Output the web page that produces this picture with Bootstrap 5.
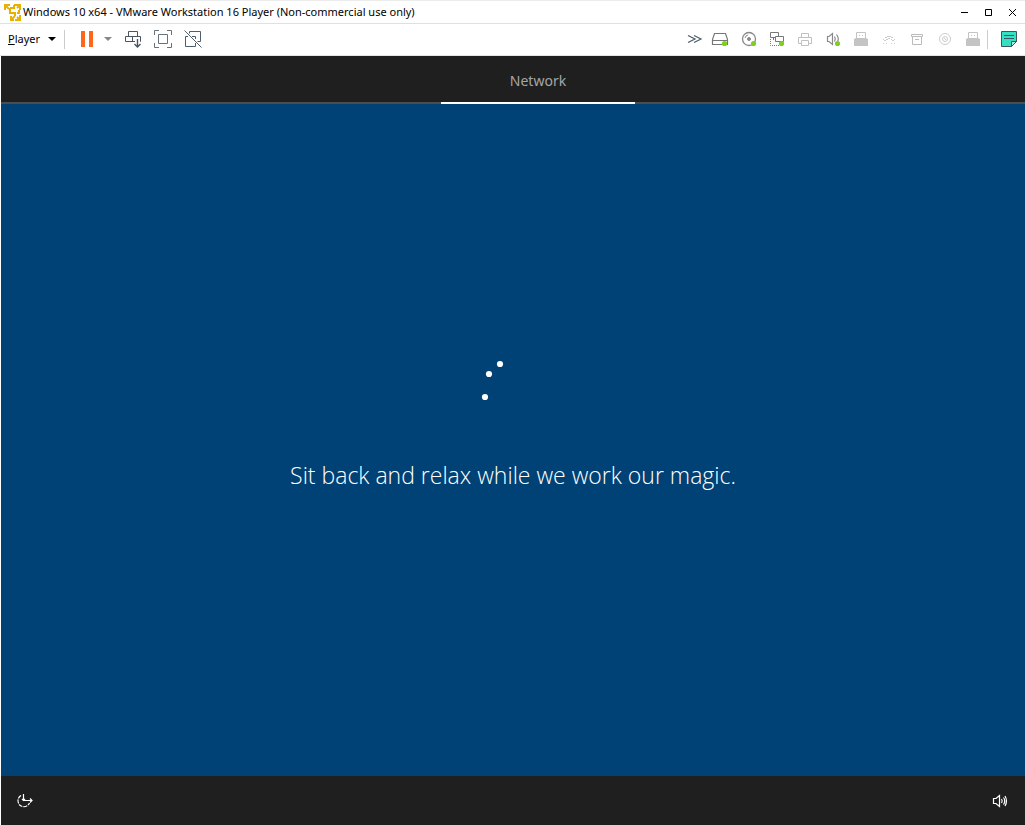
<!DOCTYPE html>
<html lang="en">
<head>
<meta charset="utf-8">
<meta name="viewport" content="width=device-width, initial-scale=1">
<title>Windows 10 x64 - VMware Workstation 16 Player</title>
<link href="https://cdn.jsdelivr.net/npm/bootstrap@5.3.0/dist/css/bootstrap.min.css" rel="stylesheet">
<style>
  body { font-family: "Noto Sans", "Open Sans", sans-serif; font-size: 11px; line-height: 16px; color: #000; background: #fff; }
  svg { display: block; flex: none; }
  .titlebar { height: 24px; border-top: 1px solid #ececec; border-bottom: 1px solid #e0e0e0; }
  .titlebar h1 { font-size: 11px; line-height: 16px; font-weight: 400; padding-left: 2px; }
  .toolbar { height: 32px; border-bottom: 1px solid #e4e6e4; padding-bottom: 1px; }
  .tool { display: flex; align-items: center; justify-content: center; height: 30px; padding: 0; border: 0; background: none; color: inherit; }
  .win { width: 24px; height: 22px; }
  .dev { width: 28px; }
  .act { width: 30px; }
  .power { width: 20px; margin-left: 5px; }
  .log { margin: 0 2px 0 7px; }
  .rule { width: 1px; height: 19px; background: #ccc; }
  .guest { margin-left: 1px; }
  .stages { height: 48px; background: #1f1f1f; border-bottom: 2px solid #4d4d4d; padding-left: 50px; }
  .stage-tab { width: 194px; height: 48px; margin-bottom: -2px; padding-top: 4px; border-bottom: 2px solid #fff; color: #a6a6a6; font-size: 14px; line-height: 20px; text-decoration: none; }
  .stage-view { background: #004275; color: #fff; gap: 36px; padding-bottom: 24px; }
  .message { font-family: "Open Sans", "Noto Sans", sans-serif; font-size: 23px; line-height: 38px; font-weight: 300; margin-bottom: 2px; }
  .bottom { height: 49px; background: #1f1f1f; color: #fff; padding: 1px 16px 0 15px; }
</style>
</head>
<body class="d-flex flex-column vh-100 overflow-hidden">
<header>
  <div class="titlebar d-flex align-items-center">
    <svg class="ms-1" width="17" height="17" viewBox="0 0 17 17" fill="none" stroke="#e9b000" stroke-width="2"><path d="M1 6V1h5M1 1l4 4M6 4h4V1M10 1h6v5M16 1l-3 3M6 4v5h5v3M15 6v3h-2M7 12v4h3M8 15l3-3M16 11v5h-5M16 16l-3-3"/></svg>
    <h1 class="mb-0 text-nowrap flex-grow-1">Windows 10 x64 - VMware Workstation 16 Player (Non-commercial use only)</h1>
    <button class="tool win" type="button" aria-label="Minimize"><svg width="8" height="9" viewBox="0 0 8 9"><path d="M0 4h7v1H0z"/></svg></button>
    <button class="tool win" type="button" aria-label="Maximize"><svg width="8" height="9" viewBox="0 0 8 9" fill="none" stroke="#000"><path d="M.5 1.500h6v6h-6z"/></svg></button>
    <button class="tool win" type="button" aria-label="Close"><svg width="8" height="9" viewBox="0 0 8 9" stroke="#000"><path d="M0 1l7 7M7 1L0 8"/></svg></button>
  </div>
  <nav class="toolbar d-flex align-items-center" aria-label="Virtual machine">
    <button class="tool ms-2" type="button"><span><u>P</u>layer</span><svg class="ms-2" width="8" height="5" viewBox="0 0 8 5"><path d="M0 0h8L4 4z"/></svg></button>
    <span class="rule ms-2 me-3"></span>
    <button class="tool" type="button" aria-label="Suspend"><svg width="12" height="16" viewBox="0 0 12 16" fill="#ff661b"><path d="M0 0h4v16H0zM8 0h4v16H8z"/></svg></button>
    <button class="tool power" type="button" aria-label="Power options"><svg width="8" height="5" viewBox="0 0 8 5" fill="#888"><path d="M0 0h8L4 4z"/></svg></button>
    <button class="tool act" type="button" aria-label="Send Ctrl+Alt+Del"><svg width="18" height="18" viewBox="0 0 18 18" fill="none" stroke="#4a5560"><path d="M4.500 1.500h9v5h-9zM11 11.500H1.500v-5h15v5H16M8.500 6.500v5"/><path d="M13.500 9v8M10.500 14l3 3 3-3" stroke-width="1.400"/></svg></button>
    <button class="tool act" type="button" aria-label="Full screen"><svg width="18" height="18" viewBox="0 0 18 18" fill="none" stroke="#66717a"><path d="M.5 5V.5H5M13 .5h4.500V5M17.500 13v4.500H13M5 17.500H.5V13M4.500 4.500h9v9h-9z"/></svg></button>
    <button class="tool act" type="button" aria-label="Unity"><svg width="18" height="18" viewBox="0 0 18 18" fill="none" stroke="#4d5e6c"><path d="M5.500 1.500h11v10h-3M5.500 1.500v2M4 6.500H1.500v10h10V13M8 6.500h3.500V9M.5.5l17 17"/></svg></button>

    <div class="d-flex align-items-center ms-auto">
      <button class="tool dev" type="button" aria-label="Collapse devices"><svg width="16" height="10" viewBox="0 0 16 10" fill="none" stroke="#4a5a6a" stroke-width="1.200"><path d="M1 1.500l7 3.500-7 3.500M7 1.500l7 3.500-7 3.500"/></svg></button>
      <button class="tool" type="button" aria-label="Hard disk"><svg width="22" height="18" viewBox="0 0 22 18" fill="none" stroke="#777"><path d="M5.500 3.500h11l2 6v5H3.500v-5zM3.500 10.500h15" stroke-width="1.200"/><circle cx="15.500" cy="13.500" r="2.600" fill="#7fd01a" stroke="none"/></svg></button>
      <button class="tool dev ms-1" type="button" aria-label="CD/DVD"><svg width="18" height="18" viewBox="0 0 18 18" fill="none" stroke="#888"><circle cx="9" cy="9" r="6.500" stroke-width="1.300"/><circle cx="9" cy="9" r="1.500" fill="#888"/><path d="M5 8a4 4 0 0 1 3-3"/><circle cx="13.500" cy="13.500" r="2.600" fill="#7fd01a" stroke="none"/></svg></button>
      <button class="tool dev" type="button" aria-label="Network adapter"><svg width="18" height="18" viewBox="0 0 18 18" fill="none" stroke="#777"><path d="M7 7.500H2.500v-5h8V6M7.500 11.500v-5h8v5zM5.500 8v2"/><path d="M2.500 9v6.500H11" stroke-dasharray="1 1"/><circle cx="13.500" cy="13.500" r="2.600" fill="#7fd01a" stroke="none"/></svg></button>
      <button class="tool dev" type="button" aria-label="Printer"><svg width="18" height="18" viewBox="0 0 18 18" fill="none" stroke="#c0c0c0"><path d="M5.500 7.500v-4h7v4M5 13.500H2.500v-6h13v6H13M5.500 10.500h7v5h-7z"/></svg></button>
      <button class="tool dev" type="button" aria-label="Sound card"><svg width="18" height="18" viewBox="0 0 18 18" fill="none" stroke="#888"><path d="M3.500 6.500H5l3.500-3v11l-3.500-3H3.500zM10.500 6.500q1.500 2.500 0 5M12.500 4.500q3 4 1 7" stroke-width="1.200"/><circle cx="13.500" cy="13.500" r="2.600" fill="#7fd01a" stroke="none"/></svg></button>
      <button class="tool dev" type="button" aria-label="USB device"><svg width="18" height="18" viewBox="0 0 18 18" fill="#c4c4c4"><path d="M2 9l2-1h10l2 1v7H2z"/><path d="M4.500 8V2.500h9V8" fill="none" stroke="#c4c4c4"/><path d="M7 5h1v1H7zM10 5h1v1h-1z"/></svg></button>
      <button class="tool dev" type="button" aria-label="Serial connection"><svg width="18" height="18" viewBox="0 0 18 18" fill="#ccc"><path d="M7 6h4v1H7zM5 7h2v1H5zM11 7h2v1h-2zM8 8h2v1H8zM3 9h1v1H3zM6 9h2v1H6zM11 9h1v1h-1zM14 9h1v1h-1zM4 10h2v1H4zM12 10h2v1h-2zM3 13h1v1H3zM6 13h1v1H6zM11 13h1v1h-1zM14 13h1v1h-1z"/></svg></button>
      <button class="tool dev" type="button" aria-label="Storage"><svg width="18" height="18" viewBox="0 0 18 18" fill="none" stroke="#bbb"><path d="M3.500 4.500h11v2h-11zM4.500 6.500v8h9v-8M7 9.500h4"/></svg></button>
      <button class="tool dev" type="button" aria-label="Camera"><svg width="18" height="18" viewBox="0 0 18 18" fill="none" stroke="#ccc"><circle cx="9" cy="9" r="5.500"/><circle cx="9" cy="9" r="2.500"/><path d="M8 8l2 2"/></svg></button>
      <button class="tool dev" type="button" aria-label="Second USB device"><svg width="18" height="18" viewBox="0 0 18 18" fill="#c4c4c4"><path d="M2 9l2-1h10l2 1v7H2z"/><path d="M4.500 8V2.500h9V8" fill="none" stroke="#c4c4c4"/><path d="M7 5h1v1H7zM10 5h1v1h-1z"/></svg></button>
      <span class="rule ms-px"></span>
      <button class="tool dev log" type="button" aria-label="Message log"><svg width="16" height="16" viewBox="0 0 16 16" stroke="#3f5560"><path d="M.5.5h15v10l-5 5H.5z" fill="#32e0c4"/><path d="M10.500 15.500v-5h5z" fill="#9ff0e2"/><path d="M3 4.500h10M3 7.500h10"/></svg></button>
    </div>
  </nav>
</header>
<main class="guest d-flex flex-column flex-grow-1">
  <nav class="stages d-flex justify-content-center" aria-label="Setup stages">
    <a class="stage-tab d-flex align-items-center justify-content-center" href="#stage">Network</a>
  </nav>
  <section class="stage-view d-flex flex-column align-items-center justify-content-center flex-grow-1" id="stage">
    <svg width="60" height="60" viewBox="0 0 60 60" fill="#fff" role="img" aria-label="Loading" overflow="visible"><circle cx="17" cy="4" r="3.100"/><circle cx="6" cy="14" r="3.100"/><circle cx="2" cy="37" r="3.100"/></svg>
    <p class="message text-center">Sit back and relax while we work our magic.</p>
  </section>
  <footer class="bottom d-flex align-items-center justify-content-between">
    <button class="tool" type="button" aria-label="Ease of access"><svg width="17" height="16" viewBox="0 0 17 16" fill="none" stroke="#fff" stroke-width="1.200"><path d="M5 2.500a6 6 0 1 0 8.500 7.500" stroke-dasharray="4 1"/><path d="M7.500 1v6.500H16M6 6l1.500 1.500L9 6M14 5.500l2 2-2 2"/></svg></button>
    <button class="tool" type="button" aria-label="Volume"><svg width="17" height="14" viewBox="0 0 17 14" fill="none" stroke="#fff" stroke-width="1.200"><path d="M1.500 4.500H4l3.500-3v11l-3.500-3H1.500zM9.500 5q1.500 2 0 4M11.500 3.500q2.500 3.500 0 7M13 2q3 5 0 10"/></svg></button>
  </footer>
</main>
<script src="https://cdn.jsdelivr.net/npm/bootstrap@5.3.0/dist/js/bootstrap.bundle.min.js"></script>
</body>
</html>
